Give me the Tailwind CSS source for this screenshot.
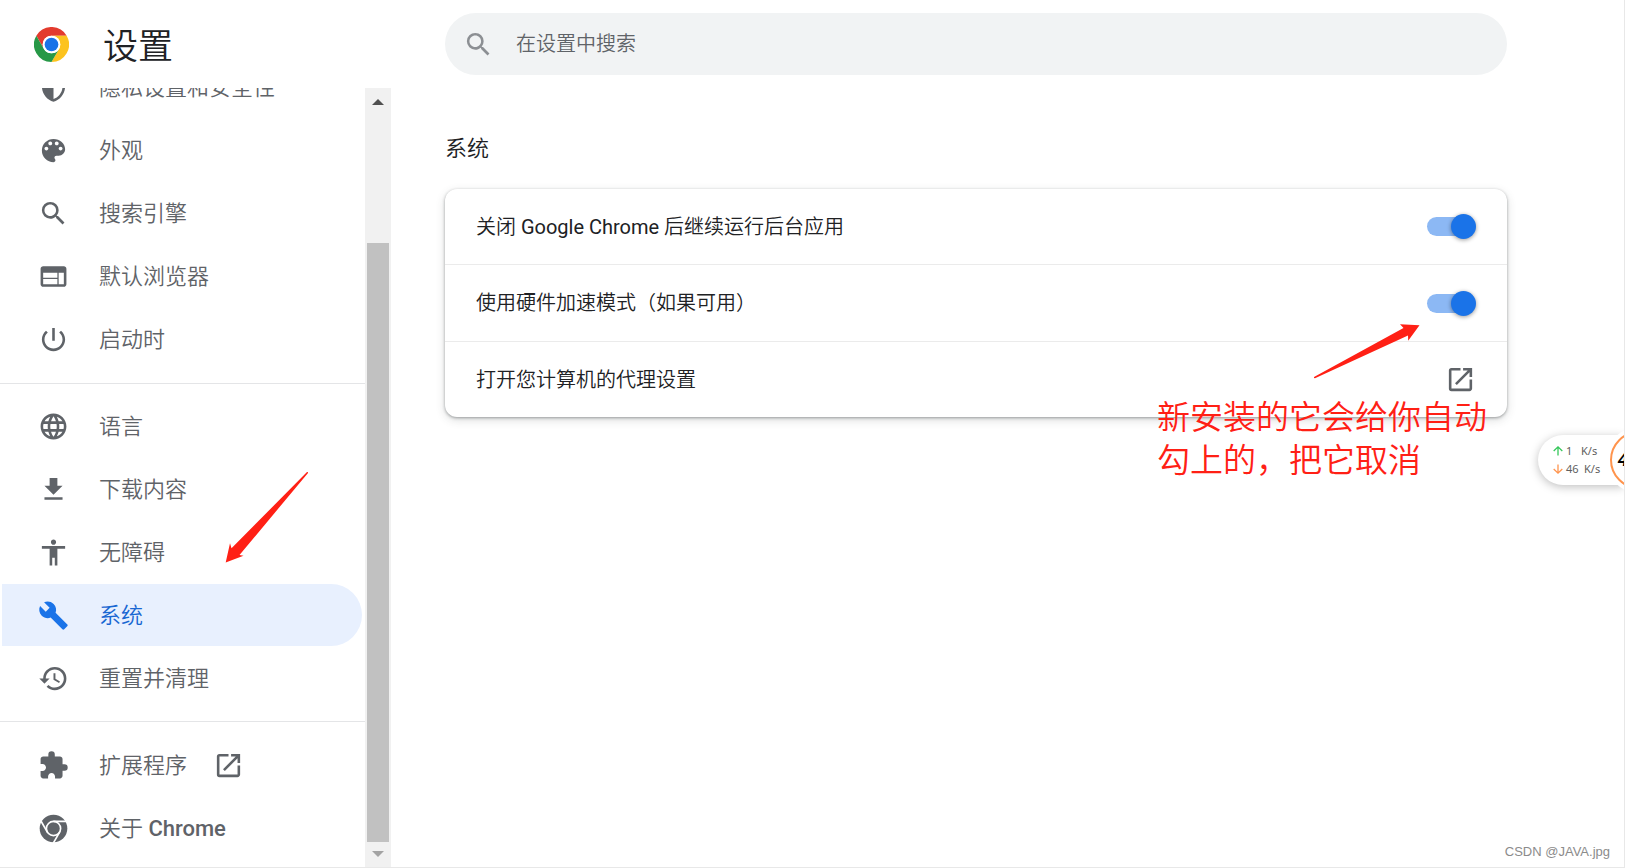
<!DOCTYPE html>
<html lang="zh-CN">
<head>
<meta charset="utf-8">
<title>设置 - 系统</title>
<script src="https://cdn.jsdelivr.net/npm/@tailwindcss/browser@4"></script>
</head>
<body class="bg-white font-['Roboto','Noto_Sans_CJK_SC',sans-serif] text-[#202124]">
<div class="relative flex h-screen flex-col overflow-hidden border-r border-b border-[#e8e8e8]">

  <header class="flex h-22 shrink-0">
    <div class="flex w-[391px] shrink-0 items-center gap-[34px] pl-[34px]">
      <svg class="size-[35px]" viewBox="0 0 48 48" aria-hidden="true">
        <path d="M3.2 12A24 24 0 0 1 44.8 12H24a12 12 0 0 0-10.4 18z" fill="#e33b2e"/>
        <path d="M44.8 12A24 24 0 0 1 24 48L34.4 30A12 12 0 0 0 24 12z" fill="#fcc31e"/>
        <path d="M24 48A24 24 0 0 1 3.2 12L13.6 30a12 12 0 0 0 20.8 0z" fill="#279847"/>
        <circle cx="24" cy="24" r="12" fill="#fff"/>
        <circle cx="24" cy="24" r="9.4" fill="#1a73e8"/>
      </svg>
      <h1 class="pt-2 text-[35px] leading-10 font-[350]">设置</h1>
    </div>
    <label class="mt-[13px] mr-[117px] ml-[54px] flex h-[62px] flex-1 items-center gap-[22px] rounded-full bg-[#f1f3f4] pl-[18px]">
      <svg class="size-[31px] shrink-0 fill-[#8c8f93]" viewBox="0 0 24 24" aria-hidden="true"><path d="M15.5 14h-.79l-.28-.27A6.47 6.47 0 0 0 16 9.5 6.5 6.5 0 1 0 9.5 16c1.61 0 3.09-.59 4.23-1.57l.27.28v.79l5 4.99L20.49 19l-4.99-5zm-6 0C7.01 14 5 11.99 5 9.5S7.01 5 9.5 5 14 7.01 14 9.5 11.99 14 9.5 14z"/></svg>
      <input type="search" aria-label="在设置中搜索" placeholder="在设置中搜索" class="min-w-0 flex-1 bg-transparent text-xl font-[350] outline-none placeholder:text-[#5f6368]">
    </label>
  </header>

  <div class="flex min-h-0 flex-1">
    <nav aria-label="设置" class="min-h-0 w-[365px] shrink-0 overflow-hidden text-[22px] font-[350] text-[#5f6368]">
      <ul class="-mt-8 flex flex-col gap-px pr-[3px] pl-[2px]">
        <li><a href="#privacy" class="flex h-[62px] items-center gap-[30px] rounded-r-full pl-9">
          <svg class="size-[31px] fill-current" viewBox="0 0 24 24" aria-hidden="true"><path fill-rule="evenodd" d="M12 1 3 5v6c0 5.55 3.84 10.74 9 12 5.16-1.26 9-6.45 9-12V5l-9-4zm0 2.2 7 3.1V11c0 4.52-2.98 8.69-7 9.93z"/></svg>隐私设置和安全性</a></li>
        <li><a href="#appearance" class="flex h-[62px] items-center gap-[30px] rounded-r-full pl-9">
          <svg class="size-[31px] fill-current" viewBox="0 0 24 24" aria-hidden="true"><path d="M12 3a9 9 0 0 0 0 18c.83 0 1.5-.67 1.5-1.5 0-.39-.15-.74-.39-1.01-.23-.26-.38-.61-.38-.99 0-.83.67-1.5 1.5-1.5H16c2.76 0 5-2.24 5-5 0-4.42-4.03-8-9-8zm-5.5 9c-.83 0-1.5-.67-1.5-1.5S5.67 9 6.500 9 8 9.670 8 10.500 7.330 12 6.500 12zm3-4C8.670 8 8 7.330 8 6.500S8.670 5 9.500 5s1.500.67 1.500 1.500S10.330 8 9.500 8zm5 0c-.83 0-1.500-.67-1.500-1.500S13.670 5 14.500 5s1.500.67 1.500 1.500S15.330 8 14.500 8zm3 4c-.83 0-1.500-.67-1.500-1.500S16.670 9 17.500 9s1.500.67 1.500 1.500-.67 1.500-1.500 1.500z"/></svg>外观</a></li>
        <li><a href="#search" class="flex h-[62px] items-center gap-[30px] rounded-r-full pl-9">
          <svg class="size-[31px] fill-current" viewBox="0 0 24 24" aria-hidden="true"><path d="M15.5 14h-.79l-.28-.27A6.47 6.47 0 0 0 16 9.5 6.5 6.5 0 1 0 9.5 16c1.61 0 3.09-.59 4.23-1.57l.27.28v.79l5 4.99L20.49 19l-4.99-5zm-6 0C7.01 14 5 11.99 5 9.5S7.01 5 9.5 5 14 7.01 14 9.5 11.99 14 9.5 14z"/></svg>搜索引擎</a></li>
        <li><a href="#default-browser" class="flex h-[62px] items-center gap-[30px] rounded-r-full pl-9">
          <svg class="size-[31px] fill-current" viewBox="0 0 24 24" aria-hidden="true"><path d="M20 4H4c-1.100 0-1.990.9-1.990 2L2 18c0 1.100.9 2 2 2h16c1.100 0 2-.9 2-2V6c0-1.100-.9-2-2-2zm-5 14H4v-4h11v4zm0-5H4V9h11v4zm5 5h-4V9h4v9z"/></svg>默认浏览器</a></li>
        <li><a href="#on-startup" class="flex h-[62px] items-center gap-[30px] rounded-r-full pl-9">
          <svg class="size-[31px] fill-current" viewBox="0 0 24 24" aria-hidden="true"><path d="M13 3h-2v10h2V3zm4.830 2.170-1.420 1.420C17.990 7.860 19 9.810 19 12c0 3.870-3.130 7-7 7s-7-3.130-7-7c0-2.190 1.010-4.140 2.580-5.420L6.170 5.170C4.230 6.820 3 9.260 3 12c0 4.970 4.030 9 9 9s9-4.030 9-9c0-2.740-1.230-5.180-3.170-6.830z"/></svg>启动时</a></li>
      </ul>
      <hr class="mt-[13px] mb-[11px] h-px border-0 bg-[#e4e5e7]">
      <ul class="flex flex-col gap-px pr-[3px] pl-[2px]">
        <li><a href="#languages" class="flex h-[62px] items-center gap-[30px] rounded-r-full pl-9">
          <svg class="size-[31px] fill-current" viewBox="0 0 24 24" aria-hidden="true"><path d="M11.990 2C6.470 2 2 6.480 2 12s4.470 10 9.990 10C17.520 22 22 17.520 22 12S17.520 2 11.990 2zm6.930 6h-2.950c-.32-1.250-.78-2.450-1.380-3.560 1.840.63 3.370 1.910 4.330 3.560zM12 4.040c.83 1.200 1.480 2.530 1.910 3.960h-3.820c.43-1.430 1.080-2.760 1.910-3.960zM4.260 14C4.100 13.360 4 12.690 4 12s.1-1.360.26-2h3.380c-.08.66-.14 1.320-.14 2s.06 1.340.14 2H4.260zm.82 2h2.950c.32 1.250.78 2.450 1.380 3.560-1.840-.63-3.370-1.900-4.330-3.560zm2.950-8H5.080c.96-1.660 2.490-2.930 4.330-3.560C8.810 5.550 8.350 6.750 8.030 8zM12 19.960c-.83-1.200-1.480-2.530-1.910-3.960h3.820c-.43 1.430-1.080 2.760-1.910 3.960zM14.340 14H9.660c-.09-.66-.16-1.320-.16-2s.07-1.350.16-2h4.680c.09.65.16 1.320.16 2s-.07 1.340-.16 2zm.25 5.560c.6-1.110 1.060-2.310 1.380-3.560h2.950c-.96 1.650-2.490 2.930-4.330 3.560zM16.360 14c.08-.66.14-1.320.14-2s-.06-1.340-.14-2h3.380c.16.64.26 1.310.26 2s-.1 1.360-.26 2h-3.380z"/></svg>语言</a></li>
        <li><a href="#downloads" class="flex h-[62px] items-center gap-[30px] rounded-r-full pl-9">
          <svg class="size-[31px] fill-current" viewBox="0 0 24 24" aria-hidden="true"><path d="M19 9h-4V3H9v6H5l7 7 7-7zM5 18v2h14v-2H5z"/></svg>下载内容</a></li>
        <li><a href="#accessibility" class="flex h-[62px] items-center gap-[30px] rounded-r-full pl-9">
          <svg class="size-[31px] fill-current" viewBox="0 0 24 24" aria-hidden="true"><path d="M12 2c1.100 0 2 .9 2 2s-.9 2-2 2-2-.9-2-2 .9-2 2-2zm9 7h-6v13h-2v-6h-2v6H9V9H3V7h18v2z"/></svg>无障碍</a></li>
        <li><a href="#system" aria-current="page" class="flex h-[62px] items-center gap-[30px] rounded-r-full bg-[#e8f0fe] pl-9 text-[#1967d2]">
          <svg class="size-[31px] fill-[#1a73e8]" viewBox="0 0 24 24" aria-hidden="true"><path d="m22.700 19-9.100-9.100c.9-2.300.4-5-1.500-6.900-2-2-5-2.400-7.400-1.300L9 6 6 9 1.600 4.700C.4 7.100.9 10.100 2.900 12.100c1.900 1.900 4.600 2.400 6.900 1.500l9.100 9.100c.4.4 1 .4 1.400 0l2.300-2.300c.5-.4.5-1.100.1-1.400z"/></svg>系统</a></li>
        <li><a href="#reset" class="flex h-[62px] items-center gap-[30px] rounded-r-full pl-9">
          <svg class="size-[31px] fill-current" viewBox="0 0 24 24" aria-hidden="true"><path d="M13 3a9 9 0 0 0-9 9H1l3.890 3.890.07.14L9 12H6c0-3.870 3.130-7 7-7s7 3.130 7 7-3.130 7-7 7c-1.930 0-3.680-.79-4.940-2.060l-1.420 1.420A8.950 8.950 0 0 0 13 21a9 9 0 0 0 0-18zm-1 5v5l4.280 2.540.72-1.210-3.500-2.080V8H12z"/></svg>重置并清理</a></li>
      </ul>
      <hr class="my-3 h-px border-0 bg-[#e4e5e7]">
      <ul class="flex flex-col gap-px pr-[3px] pl-[2px]">
        <li><a href="#extensions" class="flex h-[62px] items-center gap-[30px] rounded-r-full pl-9">
          <svg class="size-[31px] fill-current" viewBox="0 0 24 24" aria-hidden="true"><path d="M20.500 11H19V7c0-1.100-.9-2-2-2h-4V3.500a2.500 2.500 0 0 0-5 0V5H4c-1.100 0-1.990.9-1.990 2v3.800H3.500c1.490 0 2.700 1.210 2.700 2.700s-1.210 2.700-2.700 2.700H2V20c0 1.100.9 2 2 2h3.800v-1.500c0-1.490 1.210-2.700 2.700-2.700s2.700 1.210 2.700 2.700V22H17c1.100 0 2-.9 2-2v-4h1.500a2.500 2.500 0 0 0 0-5z"/></svg>
          <span class="flex items-center gap-[26px]">扩展程序
            <svg class="size-[31px] fill-current" viewBox="0 0 24 24" aria-hidden="true"><path d="M19 19H5V5h7V3H5a2 2 0 0 0-2 2v14a2 2 0 0 0 2 2h14c1.100 0 2-.9 2-2v-7h-2v7zM14 3v2h3.590l-9.830 9.830 1.410 1.410L19 6.410V10h2V3h-7z"/></svg></span></a></li>
        <li><a href="#about" class="flex h-[62px] items-center gap-[30px] rounded-r-full pl-9">
          <svg class="size-[31px]" viewBox="0 0 24 24" aria-hidden="true">
            <circle cx="12" cy="12" r="10.700" fill="#5f6368"/>
            <g fill="none" stroke="#fff" stroke-width="1.300"><circle cx="12" cy="12" r="5.500"/><path d="M12 6.500h11M7.240 14.750 1.740 5.220M16.760 14.750l-5.500 9.530"/></g>
          </svg>
          <span>关于 <span class="font-medium">Chrome</span></span></a></li>
      </ul>
    </nav>

    <div class="flex w-[26px] shrink-0 flex-col items-center bg-[#f1f1f1]" aria-hidden="true">
      <svg class="h-[26px] w-3 shrink-0" viewBox="0 0 12 26"><path d="M0 17 6 11l6 6z" fill="#505050"/></svg>
      <div class="flex w-[22px] flex-1 flex-col pt-[129px]"><div class="flex-1 bg-[#c1c1c1]"></div></div>
      <svg class="h-[25px] w-3 shrink-0" viewBox="0 0 12 25"><path d="M0 9 6 15l6-6z" fill="#a3a3a3"/></svg>
    </div>

    <main class="min-w-0 flex-1 pr-[117px] pl-[54px]">
      <h2 class="pt-[45px] pb-6 text-[22px] leading-8 font-[350]">系统</h2>
      <section class="rounded-xl bg-white text-xl font-[350] shadow-[0_1px_3px_rgba(60,64,67,0.45),0_3px_10px_rgba(60,64,67,0.18)]">
        <label class="flex h-[76px] items-center justify-between border-b border-[#ebebeb] px-[31px]">
          <span>关闭 <span class="font-normal">Google Chrome</span> 后继续运行后台应用</span>
          <input type="checkbox" role="switch" checked class="relative h-[25px] w-[49px] shrink-0 appearance-none before:absolute before:top-[3px] before:left-0 before:h-[19px] before:w-10 before:rounded-full before:bg-[#8cb8f4] after:absolute after:top-0 after:right-0 after:size-[25px] after:rounded-full after:bg-[#1a73e8] after:shadow-[0_1px_4px_rgba(0,0,0,0.4)]">
        </label>
        <label class="flex h-[77px] items-center justify-between border-b border-[#ebebeb] px-[31px]">
          <span>使用硬件加速模式（如果可用）</span>
          <input type="checkbox" role="switch" checked class="relative h-[25px] w-[49px] shrink-0 appearance-none before:absolute before:top-[3px] before:left-0 before:h-[19px] before:w-10 before:rounded-full before:bg-[#8cb8f4] after:absolute after:top-0 after:right-0 after:size-[25px] after:rounded-full after:bg-[#1a73e8] after:shadow-[0_1px_4px_rgba(0,0,0,0.4)]">
        </label>
        <button type="button" class="flex h-[75px] w-full items-center justify-between px-[31px] text-left">
          <span>打开您计算机的代理设置</span>
          <svg class="size-[31px] fill-[#5f6368]" viewBox="0 0 24 24" aria-hidden="true"><path d="M19 19H5V5h7V3H5a2 2 0 0 0-2 2v14a2 2 0 0 0 2 2h14c1.100 0 2-.9 2-2v-7h-2v7zM14 3v2h3.590l-9.830 9.830 1.410 1.410L19 6.410V10h2V3h-7z"/></svg>
        </button>
      </section>
    </main>
  </div>

  <!-- Tutorial annotations -->
  <svg class="pointer-events-none absolute top-[472px] left-[225px] h-[91px] w-[84px] fill-[#ff2015]" viewBox="0 0 84 91" aria-hidden="true"><path d="M.7 90.500 5 71.300l1.500 5L82 0h.8l.2 1-68.500 82 4 .8z"/></svg>
  <svg class="pointer-events-none absolute top-[324px] right-[204px] h-[55px] w-[106px] fill-[#ff2015]" viewBox="0 0 106 55" aria-hidden="true"><path d="M105.500 1.300 86 .3l3.500 3.700L0 53v1l1 .2 93-42.700.2 5.300z"/></svg>
  <p class="pointer-events-none absolute top-[396px] right-[137px] text-[33px] leading-[43px] font-[350] text-[#ff2015]">新安装的它会给你自动<br>勾上的，把它取消</p>

  <!-- Network speed widget docked to the window edge -->
  <aside class="absolute top-[435px] right-0 flex h-[50px] w-[86px] flex-col justify-center rounded-l-full bg-white pl-[15px] font-['Noto_Sans',sans-serif] text-[11px] leading-[18px] text-[#606060] shadow-[0_2px_10px_rgba(0,0,0,0.25)]">
    <div class="flex items-center gap-[3px]"><svg class="size-[10px]" viewBox="0 0 10 10" fill="none" stroke="#34c759" stroke-width="1.300"><path d="M5 9.500V1M.7 5 5 .9 9.300 5"/></svg><span class="w-3">1</span><span>K/s</span></div>
    <div class="flex items-center gap-[3px]"><svg class="size-[10px]" viewBox="0 0 10 10" fill="none" stroke="#ff944d" stroke-width="1.300"><path d="M5 .5V9M.7 5 5 9.100 9.300 5"/></svg><span class="w-[15px]">46</span><span>K/s</span></div>
    <svg class="absolute -top-2 right-0 h-[66px] w-[18px]" viewBox="0 0 18 66"><circle cx="33" cy="33" r="33" fill="#fff"/><circle cx="33" cy="33" r="28" fill="#fff" stroke="#ff944d" stroke-width="2"/><text x="12" y="39" font-family="Liberation Sans" font-size="18" font-weight="700" font-style="italic">4</text></svg>
  </aside>

  <p class="absolute right-[14px] bottom-[7px] font-['Liberation_Sans',sans-serif] text-[13px] leading-4 text-[#8b8b8b]">CSDN @JAVA.jpg</p>
</div>
</body>
</html>
